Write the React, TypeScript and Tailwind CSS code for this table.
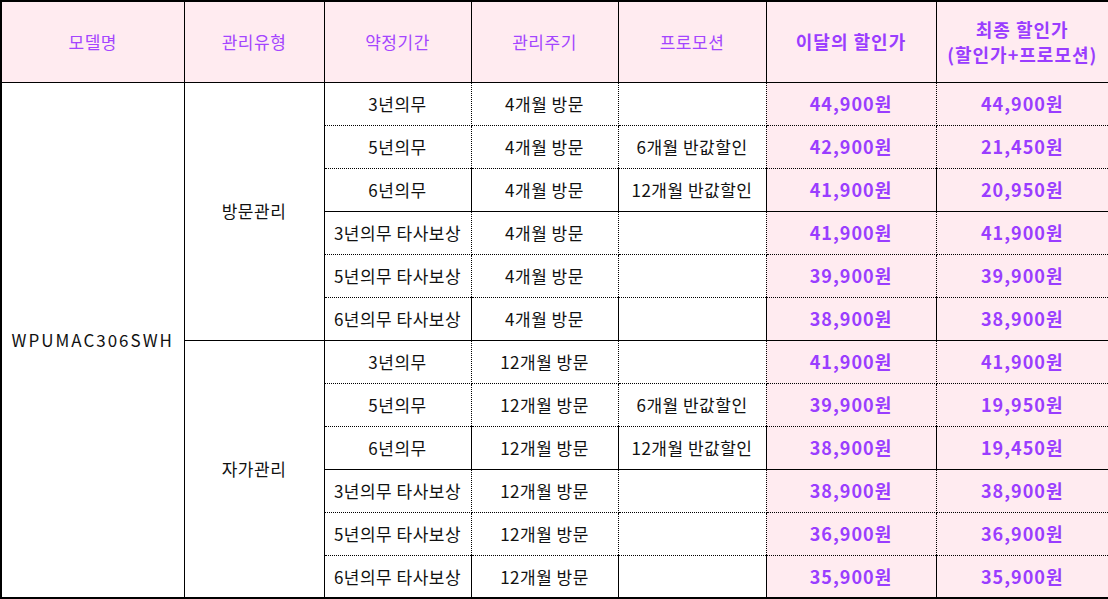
import React from "react";

type Row = { term: string; cycle: string; promo: string; price: string; final: string };

const visit: Row[] = [
  { term: "3년의무", cycle: "4개월 방문", promo: "", price: "44,900원", final: "44,900원" },
  { term: "5년의무", cycle: "4개월 방문", promo: "6개월 반값할인", price: "42,900원", final: "21,450원" },
  { term: "6년의무", cycle: "4개월 방문", promo: "12개월 반값할인", price: "41,900원", final: "20,950원" },
  { term: "3년의무 타사보상", cycle: "4개월 방문", promo: "", price: "41,900원", final: "41,900원" },
  { term: "5년의무 타사보상", cycle: "4개월 방문", promo: "", price: "39,900원", final: "39,900원" },
  { term: "6년의무 타사보상", cycle: "4개월 방문", promo: "", price: "38,900원", final: "38,900원" },
];
const self: Row[] = [
  { term: "3년의무", cycle: "12개월 방문", promo: "", price: "41,900원", final: "41,900원" },
  { term: "5년의무", cycle: "12개월 방문", promo: "6개월 반값할인", price: "39,900원", final: "19,950원" },
  { term: "6년의무", cycle: "12개월 방문", promo: "12개월 반값할인", price: "38,900원", final: "19,450원" },
  { term: "3년의무 타사보상", cycle: "12개월 방문", promo: "", price: "38,900원", final: "38,900원" },
  { term: "5년의무 타사보상", cycle: "12개월 방문", promo: "", price: "36,900원", final: "36,900원" },
  { term: "6년의무 타사보상", cycle: "12개월 방문", promo: "", price: "35,900원", final: "35,900원" },
];

const font = { fontFamily: '"Noto Sans CJK KR", "Noto Sans", sans-serif' };

export default function App() {
  const rows: { group: string; r: Row; i: number }[] = [];
  visit.forEach((r, i) => rows.push({ group: "방문관리", r, i }));
  self.forEach((r, i) => rows.push({ group: "자가관리", r, i }));

  const th = "border border-black bg-[#ffebf0] text-[#a445ff] font-normal text-[17px] tracking-[0.5px] text-center align-middle";
  const thb = "border border-black bg-[#ffebf0] text-[#9a3dff] font-bold text-[18px] tracking-[1px] text-center align-middle leading-[25px]";
  return (
    <div className="w-[1108px] h-[599px] bg-white" style={font}>
      <table className="table-fixed border-collapse border-2 border-black w-[1108px] text-[17px] tracking-[0.5px] text-[#111]">
        <colgroup>
          <col className="w-[183px]" />
          <col className="w-[140px]" />
          <col className="w-[147px]" />
          <col className="w-[147px]" />
          <col className="w-[148px]" />
          <col className="w-[170px]" />
          <col className="w-[173px]" />
        </colgroup>
        <thead>
          <tr className="h-[81px]">
            <th className={th}>모델명</th>
            <th className={th}>관리유형</th>
            <th className={th}>약정기간</th>
            <th className={th}>관리주기</th>
            <th className={th}>프로모션</th>
            <th className={thb}>이달의 할인가</th>
            <th className={thb}>
              최종 할인가
              <br />
              (할인가+프로모션)
            </th>
          </tr>
        </thead>
        <tbody>
          {rows.map(({ group, r, i }, idx) => {
            const groupEnd = i === 2 || i === 5;
            const bottom = groupEnd ? "border-b border-b-black border-solid" : "border-b border-dotted border-b-black";
            const cell = `border-l border-r border-black ${bottom} text-center align-middle p-0 whitespace-nowrap`;
            const price = `${cell} bg-[#ffebf0] text-[#9a3dff] font-bold text-[18px] tracking-[1px]`;
            return (
              <tr key={idx} className="h-[43px]">
                {idx === 0 && (
                  <td rowSpan={12} className="border border-black text-center align-middle text-[17px] tracking-[2px]">
                    WPUMAC306SWH
                  </td>
                )}
                {i === 0 && (
                  <td rowSpan={6} className="border border-black text-center align-middle">
                    {group}
                  </td>
                )}
                <td className={cell}>{r.term}</td>
                <td className={cell}>{r.cycle}</td>
                <td className={cell}>{r.promo}</td>
                <td className={price}>{r.price}</td>
                <td className={price}>{r.final}</td>
              </tr>
            );
          })}
        </tbody>
      </table>
    </div>
  );
}
